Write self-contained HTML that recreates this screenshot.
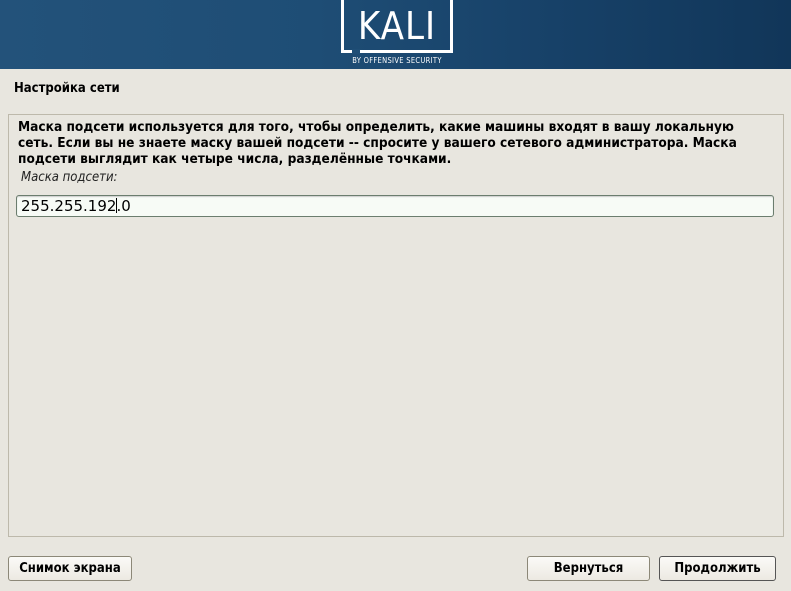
<!DOCTYPE html>
<html><head><meta charset="utf-8"><style>
body{margin:0;width:791px;height:591px;background:#e8e6df;font-family:"DejaVu Sans Condensed","DejaVu Sans",sans-serif;font-size:13px;color:#000;position:relative;overflow:hidden}
.hdr{position:absolute;left:0;top:0;width:791px;height:69px;background:linear-gradient(90deg,#23527a 0%,#1e4d75 40%,#174168 70%,#113659 100%)}
.logo{position:absolute;left:341px;top:-4px;width:106px;height:54px;border:3px solid #fff;border-top:none;}
.gap{position:absolute;left:352px;top:49px;width:8px;height:5px;background:#1f4e76}
.logo span{position:absolute;left:0;right:0;top:8px;text-align:center;color:#fff;font-family:"DejaVu Sans Condensed","DejaVu Sans",sans-serif;font-size:38px;letter-spacing:1px}
.by{position:absolute;left:341px;width:112px;top:56px;text-align:center;color:#fff;font-size:7.5px;letter-spacing:.3px}
.t{position:absolute;left:14px;top:81px;font-weight:bold}
.panel{position:absolute;left:8px;top:114px;width:774px;height:421px;border:1px solid #bdb9ab}
.p{position:absolute;left:18px;top:119px;font-weight:bold;line-height:16px;white-space:nowrap;font-size:13.6px}
.lab{position:absolute;left:21px;top:170px;font-style:italic;color:#222}
.inp{position:absolute;left:16px;top:195px;width:756px;height:20px;border:1px solid #6b7d6e;border-radius:3px;background:#f7fbf6;box-shadow:inset 0 1px 1px #ccc}
.inp span{position:absolute;left:4px;top:1px;font-family:"DejaVu Sans",sans-serif;font-size:15px;font-weight:500;white-space:nowrap}
.cur{display:inline-block;width:1px;height:15px;background:#000;vertical-align:-2px;margin-right:-1px}
.b{position:absolute;top:556px;height:23px;border:1px solid #8c8878;border-radius:3px;background:linear-gradient(#fbfaf7,#ece9e2);font-weight:bold;text-align:center;line-height:23px}
</style></head><body>
<div class="hdr"><div class="logo"><span>KALI</span></div><div class="gap"></div><div class="by">BY OFFENSIVE SECURITY</div></div>
<div class="t">Настройка сети</div>
<div class="panel"></div>
<div class="p">Маска подсети используется для того, чтобы определить, какие машины входят в вашу локальную<br>сеть. Если вы не знаете маску вашей подсети -- спросите у вашего сетевого администратора. Маска<br>подсети выглядит как четыре числа, разделённые точками.</div>
<div class="lab">Маска подсети:</div>
<div class="inp"><span>255.255.192<i class="cur"></i>.0</span></div>
<div class="b" style="left:8px;width:122px">Снимок экрана</div>
<div class="b" style="left:527px;width:121px">Вернуться</div>
<div class="b" style="left:659px;width:115px;border-color:#555">Продолжить</div>
</body></html>
